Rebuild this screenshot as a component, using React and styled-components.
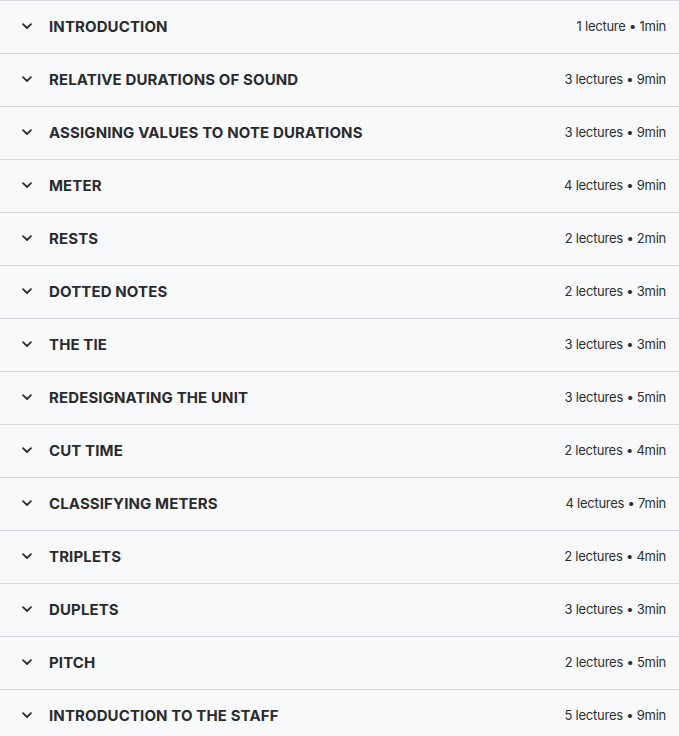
import React from "react";
import styled, { createGlobalStyle } from "styled-components";

const Global = createGlobalStyle`
  html, body { margin: 0; padding: 0; background: #f7f9fa; }
  body { font-family: Inter, "Noto Sans", "Liberation Sans", sans-serif; color: #2d2f31; }
`;

const List = styled.div`
  display: flex;
  flex-direction: column;
  width: 679px;
  background: #f7f9fa;
`;

const Row = styled.div`
  display: flex;
  align-items: center;
  height: 50px;
  border-top: 1px solid #d1d7dc;
  padding: 0 13px 2px 21px;
  box-sizing: content-box;
`;

const Chevron = styled.svg`
  width: 12px;
  height: 12px;
  flex: none;
  margin-right: 16px;
  color: #2d2f31;
`;

const Title = styled.span`
  flex: 1;
  font-size: 15px;
  font-weight: 700;
  letter-spacing: 0.12px;
  text-transform: uppercase;
  color: #2a2b2d;
`;

const Meta = styled.span`
  font-size: 13px;
  font-weight: 400;
  letter-spacing: -0.25px;
  color: #2d2f31;
`;

const sections = [
  ["Introduction", "1 lecture • 1min"],
  ["Relative Durations of Sound", "3 lectures • 9min"],
  ["Assigning Values to Note Durations", "3 lectures • 9min"],
  ["Meter", "4 lectures • 9min"],
  ["Rests", "2 lectures • 2min"],
  ["Dotted Notes", "2 lectures • 3min"],
  ["The Tie", "3 lectures • 3min"],
  ["Redesignating the Unit", "3 lectures • 5min"],
  ["Cut Time", "2 lectures • 4min"],
  ["Classifying Meters", "4 lectures • 7min"],
  ["Triplets", "2 lectures • 4min"],
  ["Duplets", "3 lectures • 3min"],
  ["Pitch", "2 lectures • 5min"],
  ["Introduction to the Staff", "5 lectures • 9min"],
];

export default function App() {
  return (
    <>
      <Global />
      <List>
        {sections.map(([t, m]) => (
          <Row key={t}>
            <Chevron viewBox="0 0 12 12" fill="none">
              <path d="M2 4.2 L6 8 L10 4.2" stroke="currentColor" strokeWidth="1.8" strokeLinecap="round" strokeLinejoin="round" />
            </Chevron>
            <Title>{t}</Title>
            <Meta>{m}</Meta>
          </Row>
        ))}
      </List>
    </>
  );
}
